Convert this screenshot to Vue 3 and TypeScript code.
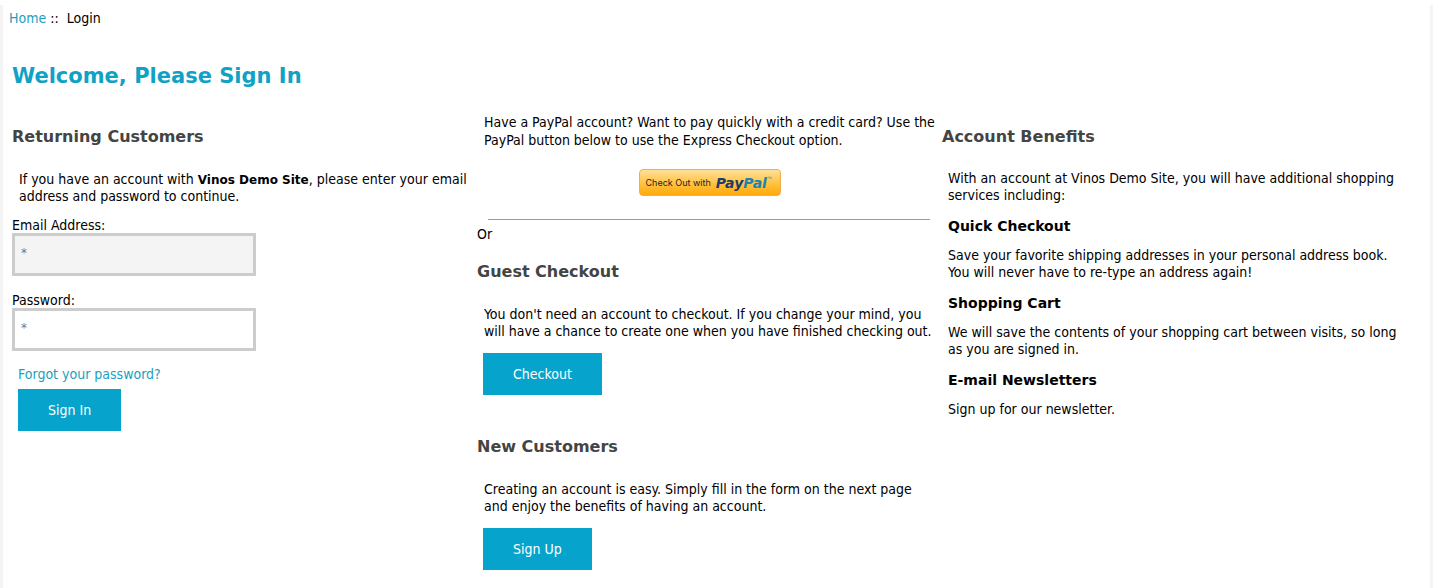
<script setup lang="ts">
import { ref } from 'vue'

interface Benefit {
  title: string
  text: string
}

const email = ref('')
const password = ref('')

const benefits: Benefit[] = [
  {
    title: 'Quick Checkout',
    text: 'Save your favorite shipping addresses in your personal address book. You will never have to re-type an address again!',
  },
  {
    title: 'Shopping Cart',
    text: 'We will save the contents of your shopping cart between visits, so long as you are signed in.',
  },
  { title: 'E-mail Newsletters', text: 'Sign up for our newsletter.' },
]
</script>

<template>
  <div class="page">
    <nav class="breadcrumb"><a href="#">Home</a> ::&nbsp; Login</nav>
    <main>
      <h1>Welcome, Please Sign In</h1>
      <div class="columns">
        <section class="column">
          <h2>Returning Customers</h2>
          <p class="info">
            If you have an account with <strong>Vinos Demo Site</strong>, please enter your email
            address and password to continue.
          </p>
          <form @submit.prevent>
            <div class="field">
              <label for="email">Email Address:</label>
              <input id="email" v-model="email" class="filled" type="text" placeholder="*" />
            </div>
            <div class="field">
              <label for="password">Password:</label>
              <input id="password" v-model="password" type="password" placeholder="*" />
            </div>
            <a class="forgot" href="#">Forgot your password?</a>
            <button class="button" type="submit">Sign In</button>
          </form>
        </section>

        <section class="column">
          <p class="info express">
            Have a PayPal account? Want to pay quickly with a credit card? Use the PayPal button
            below to use the Express Checkout option.
          </p>
          <button class="paypal" type="button">
            <span class="paypal-label">Check Out with</span>
            <span class="paypal-logo"><span class="pay">Pay</span><span class="pal">Pal</span></span>
            <span class="mark">™</span>
          </button>
          <hr />
          <div class="or">Or</div>
          <h2>Guest Checkout</h2>
          <p class="info">
            You don't need an account to checkout. If you change your mind, you will have a chance
            to create one when you have finished checking out.
          </p>
          <button class="button" type="button">Checkout</button>
          <h2 class="spaced">New Customers</h2>
          <p class="info">
            Creating an account is easy. Simply fill in the form on the next page and enjoy the
            benefits of having an account.
          </p>
          <button class="button" type="button">Sign Up</button>
        </section>

        <section class="column benefits">
          <h2>Account Benefits</h2>
          <p>
            With an account at Vinos Demo Site, you will have additional shopping services
            including:
          </p>
          <template v-for="benefit in benefits" :key="benefit.title">
            <h3>{{ benefit.title }}</h3>
            <p>{{ benefit.text }}</p>
          </template>
        </section>
      </div>
    </main>
  </div>
</template>

<style>
body {
  margin: 0;
  background: #fff;
}
</style>

<style scoped>
.page {
  box-sizing: border-box;
  min-height: calc(100vh - 5px);
  margin-top: 5px;
  padding: 5px 23px 18px 6px;
  border: solid #f4f4f4;
  border-width: 0 3px;
  color: #000;
  font: 14px/17px 'DejaVu Sans Condensed', Verdana, 'DejaVu Sans', sans-serif;
}
a {
  color: #1c9fbc;
  text-decoration: none;
}
main {
  padding-left: 3px;
}
h1,
h2,
h3,
strong {
  font-family: 'DejaVu Sans', Verdana, sans-serif;
}
h1 {
  margin: 36px 0 0;
  color: #0fa2c4;
  font-size: 21px;
  line-height: 26px;
}
.columns {
  display: grid;
  grid-template-columns: repeat(3, minmax(0, 1fr));
  margin-top: 24px;
}
h2 {
  margin: 0;
  color: #444;
  font-size: 16px;
  line-height: 22px;
}
strong {
  font-size: 12px;
  line-height: 12px;
}
.column > h2:first-child {
  margin-top: 13px;
}
.info {
  margin: 23px 4px 0 7px;
}
.info.express {
  margin-top: 0;
  line-height: 18px;
}
.field {
  display: flex;
  flex-direction: column;
  align-items: flex-start;
  margin-top: 12px;
  line-height: 16px;
}
.field + .field {
  margin-top: 16px;
}
input {
  box-sizing: border-box;
  width: 244px;
  height: 43px;
  padding: 0 6px 4px;
  border: 3px solid #ccc;
  background: #fff;
  color: #000;
  font: 12px Verdana, 'DejaVu Sans', sans-serif;
}
input.filled {
  background: #f4f4f4;
}
input::placeholder {
  color: #777;
}
.forgot {
  display: block;
  margin: 15px 0 6px 6px;
}
.button {
  display: block;
  height: 42px;
  margin: 13px 0 0 6px;
  padding: 0 30px;
  border: 0;
  background: #06a4cc;
  color: #fff;
  font: inherit;
}
.forgot + .button {
  margin-top: 0;
}
.paypal {
  display: flex;
  align-items: center;
  box-sizing: border-box;
  width: 142px;
  height: 27px;
  margin: 20px auto 0;
  padding: 0 6px;
  border: 1px solid #efb04a;
  border-radius: 4px;
  background: linear-gradient(#ffe09a, #ffc547 50%, #ffa908);
  color: #222;
  white-space: nowrap;
}
.paypal-label {
  font: 9px Inter, Arial, sans-serif;
}
.paypal-logo {
  margin-left: 5px;
  font: italic bold 14px 'DejaVu Sans', Verdana, sans-serif;
}
.pay {
  color: #1d3c6c;
}
.pal {
  color: #1b83b5;
}
.mark {
  align-self: flex-start;
  margin-top: 5px;
  color: #5b7d8c;
  font: 5px Arial, 'Liberation Sans', sans-serif;
}
hr {
  height: 1px;
  margin: 23px 12px 0 11px;
  border: 0;
  background: #999;
}
.or {
  margin: 6px 0 18px;
}
.spaced {
  margin-top: 41px;
}
.benefits p {
  margin: 22px 6px 0;
}
.benefits h3 {
  margin: 13px 6px 0;
  font-size: 14px;
  line-height: 18px;
}
.benefits h3 + p {
  margin-top: 12px;
}
</style>
